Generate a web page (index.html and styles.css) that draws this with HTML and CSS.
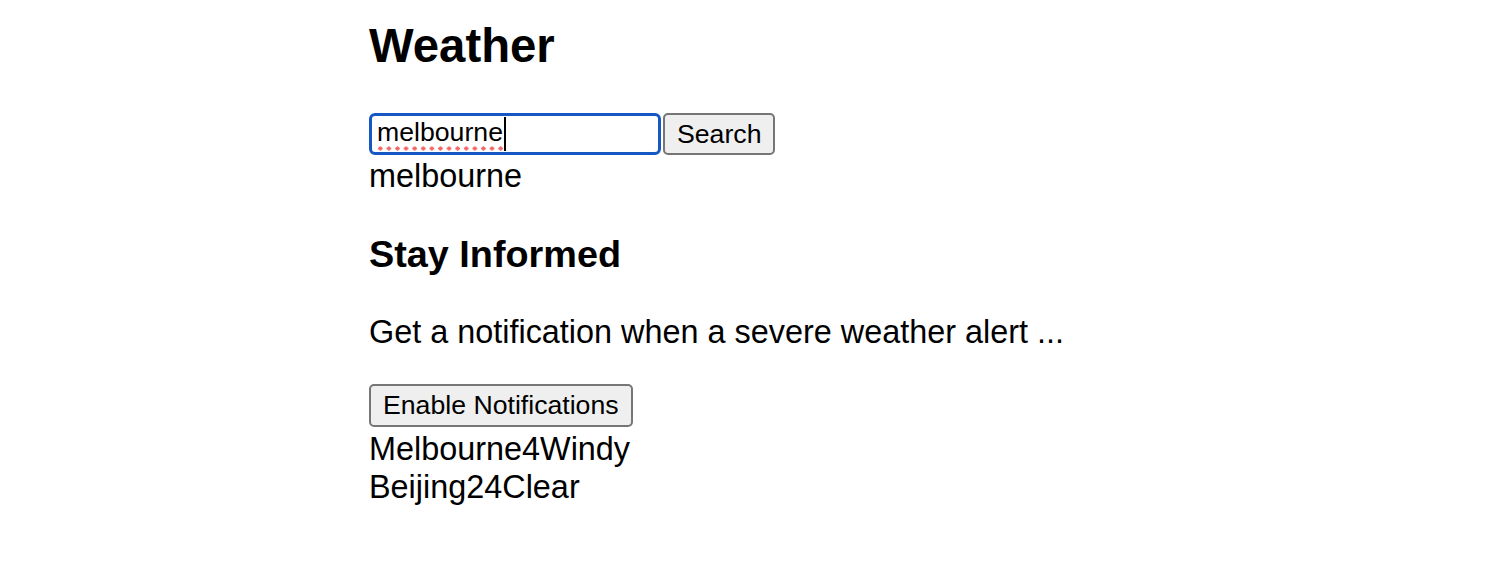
FILE: index.html
```html
<!DOCTYPE html>
<html lang="en">
<head>
<meta charset="utf-8">
<title>Weather</title>
<link rel="stylesheet" href="styles.css">
</head>
<body>
<main class="app">
  <h1 class="title">Weather</h1>
  <form class="search">
    <div class="field" role="textbox" aria-label="City"><span class="typed">melbourne</span><span class="caret"></span></div>
    <button type="button" class="btn">Search</button>
  </form>
  <div class="line">melbourne</div>
  <section class="notify">
    <h2 class="subtitle">Stay Informed</h2>
    <p class="text">Get a notification when a severe weather alert ...</p>
    <button type="button" class="btn btn-block">Enable Notifications</button>
  </section>
  <ul class="cities">
    <li class="line">Melbourne4Windy</li>
    <li class="line">Beijing24Clear</li>
  </ul>
</main>
</body>
</html>
```
FILE: styles.css
```css
html, body {
  margin: 0;
  padding: 0;
  background: #ffffff;
}
body {
  font-family: "Liberation Sans", Arial, Helvetica, sans-serif;
  font-size: 32.4px;
  line-height: 38px;
  color: #000000;
}
.app {
  width: 760px;
  margin: 0 auto;
  padding-top: 18px;
}
.title {
  font-size: 47.3px;
  line-height: 56px;
  font-weight: 700;
  margin: 0 0 39px;
}
.search {
  display: flex;
  align-items: center;
  gap: 2px;
  margin: 0 0 2px;
}
.field {
  box-sizing: border-box;
  width: 292px;
  height: 42px;
  border: 3px solid #1558c4;
  border-radius: 6px;
  padding: 0 5px;
  display: flex;
  align-items: center;
  font-size: 26.67px;
  line-height: normal;
  background: #fff;
}
.typed {
  padding-bottom: 3px;
  background-image: radial-gradient(circle, #f26a6a 1.9px, rgba(242,106,106,0) 2.3px);
  background-size: 8.6px 5px;
  background-repeat: repeat-x;
  background-position: -1px 100%;
}
.caret {
  display: inline-block;
  width: 2px;
  height: 34px;
  background: #000;
  margin-left: 1px;
}
.btn {
  box-sizing: border-box;
  font-family: "Liberation Sans", Arial, Helvetica, sans-serif;
  font-size: 26.67px;
  line-height: normal;
  height: 42px;
  padding: 0 12px;
  background: #efefef;
  color: #000;
  border: 2px solid #767676;
  border-radius: 5px;
}
.btn-block {
  display: block;
  height: 43px;
  margin-bottom: 3px;
}
.line {
  margin: 0;
}
.subtitle {
  font-size: 37.8px;
  line-height: 45px;
  font-weight: 700;
  margin: 37.44px 0 35.4px;
}
.text {
  margin: 0 0 33px;
}
.notify {
  margin: 0;
}
.cities {
  list-style: none;
  margin: 0;
  padding: 0;
}
```
